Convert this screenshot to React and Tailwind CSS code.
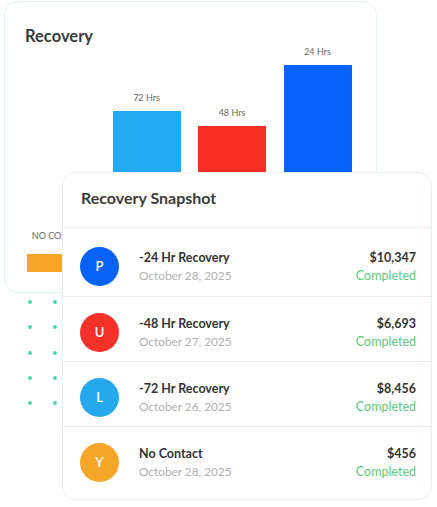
import React from "react";

const bars = [
  { label: "NO CONTACT", h: 18, color: "bg-[#f5a626]", mb: "mb-[12px]" },
  { label: "72 Hrs", h: 161, color: "bg-[#22aaf3]", mb: "mb-[7px]" },
  { label: "48 Hrs", h: 146, color: "bg-[#f72e24]", mb: "mb-[7px]" },
  { label: "24 Hrs", h: 207, color: "bg-[#0562f9]", mb: "mb-[7px]" },
];

const rows = [
  { l: "P", c: "bg-[#0661f7]", t: "-24 Hr Recovery", d: "October 28, 2025", a: "$10,347", pad: "pt-[19px] pb-[10px]" },
  { l: "U", c: "bg-[#f4322a]", t: "-48 Hr Recovery", d: "October 27, 2025", a: "$6,693", pad: "pt-[16px] pb-[9px]" },
  { l: "L", c: "bg-[#26a8ef]", t: "-72 Hr Recovery", d: "October 26, 2025", a: "$8,456", pad: "pt-[16px] pb-[9px]" },
  { l: "Y", c: "bg-[#f4a628]", t: "No Contact", d: "October 28, 2025", a: "$456", pad: "pt-[16px] pb-[9px]" },
];

export default function App() {
  const font = { fontFamily: "Lato, 'Noto Sans', sans-serif" };
  return (
    <div className="relative w-[437px] h-[507px] bg-white overflow-hidden" style={font}>
      {/* back card */}
      <div className="ml-[4px] mt-[1px] w-[373px] h-[292px] rounded-[14px] border border-[#e2f4ee] bg-white flex flex-col">
        <div className="pl-[20px] pt-[23px] text-[16.5px] leading-[22px] font-bold text-[#3b3b3b]">Recovery</div>
        <div className="h-[225px] flex items-end gap-[17.5px] pl-[22px]">
          {bars.map((b) => (
            <div key={b.label} className="w-[68px] flex flex-col items-center">
              <div className={`text-[9px] leading-[12px] text-[#666] whitespace-nowrap ${b.mb}`}>{b.label}</div>
              <div className={`w-[68px] ${b.color}`} style={{ height: b.h }} />
            </div>
          ))}
        </div>
      </div>

      {/* dots */}
      <div className="absolute left-[28px] top-[300px] grid grid-cols-2 gap-x-[21px] gap-y-[21.25px]">
        {Array.from({ length: 10 }).map((_, i) => (
          <div key={i} className="w-[4px] h-[4px] rounded-full bg-[#4fd8a2]" />
        ))}
      </div>

      {/* front card */}
      <div className="absolute left-[62px] top-[172px] w-[370px] h-[328px] rounded-[14px] border border-[#e3f1ec] bg-white flex flex-col">
        <div className="h-[55px] border-b border-[#e6eceb] flex items-center pl-[18px] pb-[5px]">
          <span className="text-[16px] font-bold text-[#3b3b3b]">Recovery Snapshot</span>
        </div>
        {rows.map((r, i) => (
          <div
            key={r.l}
            className={`flex items-center pl-[17px] pr-[15px] ${r.pad} ${i < 3 ? "border-b border-[#e6eceb]" : ""}`}
          >
            <div className={`w-[39px] h-[39px] rounded-full ${r.c} flex items-center justify-center text-white text-[13px] font-semibold`}>
              {r.l}
            </div>
            <div className="ml-[20px] flex flex-col">
              <span className="text-[12.5px] leading-[18px] font-bold text-[#333]">{r.t}</span>
              <span className="text-[11.8px] leading-[18px] text-[#b0b0b0]">{r.d}</span>
            </div>
            <div className="ml-auto flex flex-col items-end">
              <span className="text-[12.5px] leading-[18px] font-bold text-[#333]">{r.a}</span>
              <span className="text-[12.5px] leading-[18px] text-[#5dc97d]">Completed</span>
            </div>
          </div>
        ))}
      </div>
    </div>
  );
}
